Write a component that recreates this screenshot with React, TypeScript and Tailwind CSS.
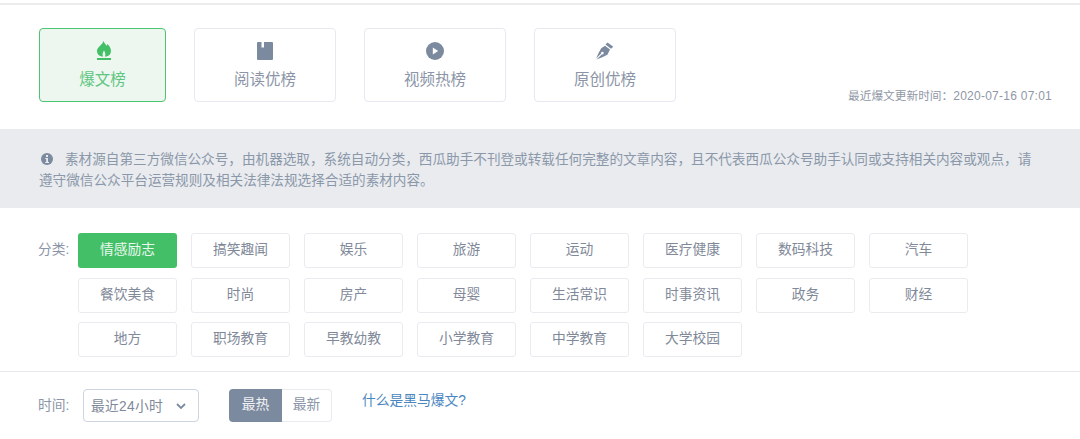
const cjk = "font-['Liberation_Sans','Noto_Sans_CJK_SC',sans-serif]";

const tabs = [
  { label: "爆文榜", icon: "flame" },
  { label: "阅读优榜", icon: "book" },
  { label: "视频热榜", icon: "play" },
  { label: "原创优榜", icon: "pen" },
];

const rows = [
  ["情感励志", "搞笑趣闻", "娱乐", "旅游", "运动", "医疗健康", "数码科技", "汽车"],
  ["餐饮美食", "时尚", "房产", "母婴", "生活常识", "时事资讯", "政务", "财经"],
  ["地方", "职场教育", "早教幼教", "小学教育", "中学教育", "大学校园"],
];

function TabIcon({ name }: { name: string }) {
  if (name === "flame") {
    return (
      <svg width="16" height="20" viewBox="0 0 16 20" fill="#43bf67" className="ml-[2px]">
        <path d="M7.500 0C8 2 9.500 3 10.500 4.800c.5-.5.8-1.100.9-1.800C13.500 5 15 7.300 15 10c0 3-2 5-4.500 5.400H9c.7-1.600.4-3.900-1-5.900-1.400 2-1.700 4.300-1 5.900H5.500C3 15 1 13 1 10c0-4 5-5.500 6.500-10z" />
        <rect x="1" y="17" width="14" height="2" />
      </svg>
    );
  }
  if (name === "book") {
    return (
      <svg width="16" height="18" viewBox="0 0 16 18" fill="#7b8a9e">
        <path d="M1 0h3.500v5.500H7V0h8a1 1 0 0 1 1 1v16a1 1 0 0 1-1 1H1a1 1 0 0 1-1-1V1a1 1 0 0 1 1-1z" />
      </svg>
    );
  }
  if (name === "play") {
    return (
      <svg width="18" height="18" viewBox="0 0 18 18">
        <circle cx="9" cy="9" r="9" fill="#7b8a9e" />
        <path d="M6.800 5.400l5.400 3.600-5.400 3.600z" fill="#fff" />
      </svg>
    );
  }
  return (
    <svg width="18" height="18" viewBox="0 0 18 18" fill="#7b8a9e">
      <path d="M11.500.5l5.800 4.200-2.300 2.100-5.500-4.200z" />
      <path d="M9 3.700l5 3.900-2.600 5.100-5.200 2.500-5.700 2.300 5.500-5.200a1.300 1.300 0 1 0-.9-.9L.1 16.600l2.600-5.900L5.200 6.200z" />
    </svg>
  );
}

export default function App() {
  return (
    <div className={`${cjk} h-[439px] w-[1080px] overflow-hidden bg-white`}>
      <div className="mt-[3px] h-[2px] bg-[#ececec]" />

      <div className="relative flex h-[124px] gap-7 px-[39px] pt-[23px]">
        {tabs.map((tab, i) => (
          <div
            key={tab.label}
            className={
              i === 0
                ? "flex h-[74px] w-[127px] flex-col items-center rounded border border-[#4cc570] bg-[#edf7f0] pt-[12px]"
                : "flex h-[74px] w-[142px] flex-col items-center rounded border border-[#e6e9ef] bg-white pt-[12px]"
            }
          >
            <div className="flex h-[20px] items-center">
              <TabIcon name={tab.icon} />
            </div>
            <div
              className={
                i === 0
                  ? "mt-[7px] text-[15.500px] leading-[24px] text-[#60c680]"
                  : "mt-[7px] text-[15.500px] leading-[24px] text-[#8b95a7]"
              }
            >
              {tab.label}
            </div>
          </div>
        ))}
        <div className="absolute top-[83px] right-[28px] text-[11.700px] leading-4 text-[#8f97a5]">
          最近爆文更新时间：<span className="text-[12px] tracking-[0.25px]">2020-07-16 07:01</span>
        </div>
      </div>

      <div className="h-[79px] bg-[#e9ebef] px-[39px] pt-[21px] text-[13.620px] leading-[20.500px] text-[#8b98a9]">
        <div className="w-[1000px]">
          <svg width="12" height="12" viewBox="0 0 12 12" className="mr-[12px] ml-[2px] inline-block align-[-1px]">
            <circle cx="6" cy="6" r="6" fill="#7b8a9e" />
            <rect x="5" y="2" width="2" height="2" fill="#e9ebef" />
            <path d="M4.200 5h2.800v4h1v1H4.200V9h1V6h-1z" fill="#e9ebef" />
          </svg>
          素材源自第三方微信公众号，由机器选取，系统自动分类，西瓜助手不刊登或转载任何完整的文章内容，且不代表西瓜公众号助手认同或支持相关内容或观点，请遵守微信公众平台运营规则及相关法律法规选择合适的素材内容。
        </div>
      </div>

      <div className="flex h-[164px] border-b border-[#e8e9ec] pt-[25px] pl-[38px]">
        <div className="w-[40px] pt-[7px] text-[13.750px] leading-5 text-[#8b95a7]">分类:</div>
        <div className="flex flex-col gap-[9.500px]">
          {rows.map((row, r) => (
            <div key={r} className="flex gap-[14px]">
              {row.map((item, c) => (
                <div
                  key={item}
                  className={
                    r === 0 && c === 0
                      ? "flex h-[35px] w-[99px] items-center justify-center rounded-[3px] bg-[#43bf67] text-[13.750px] text-[#e9f8ee]"
                      : "flex h-[35px] w-[99px] items-center justify-center rounded-[3px] border border-[#e9ebef] bg-white text-[13.750px] text-[#7f8999]"
                  }
                >
                  {item}
                </div>
              ))}
            </div>
          ))}
        </div>
      </div>

      <div className="flex items-start pt-[17px] pl-[38px]">
        <div className="w-[45px] pt-[7px] text-[13.750px] leading-5 text-[#8b95a7]">时间:</div>
        <div className="flex h-[33px] w-[116px] items-center rounded border border-[#cdd5e2] pl-[7px] text-[13.750px] text-[#7f8999]">
          <span className="pt-[3px] tracking-[0.3px]">最近24小时</span>
          <svg width="12" height="12" viewBox="0 0 12 12" className="ml-[12px]">
            <path d="M2 4l4 4 4-4" fill="none" stroke="#7b8a9e" strokeWidth="1.800" />
          </svg>
        </div>
        <div className="ml-[30px] flex h-[33px] text-[13.750px]">
          <div className="flex w-[53px] items-center justify-center rounded-l bg-[#7b8a9e] text-[#f0f2f5]">最热</div>
          <div className="flex w-[50px] items-center justify-center rounded-r border border-l-0 border-[#e9ebef] text-[#8b95a7]">最新</div>
        </div>
        <div className="ml-[30px] pt-[2px] text-[13.750px] leading-5 text-[#4a86c0]">什么是黑马爆文?</div>
      </div>
    </div>
  );
}
